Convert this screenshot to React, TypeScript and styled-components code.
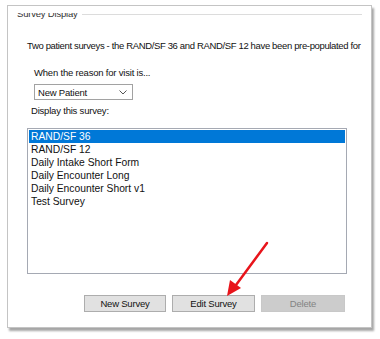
import React from "react";
import styled, { createGlobalStyle } from "styled-components";

const surveys = [
  "RAND/SF 36",
  "RAND/SF 12",
  "Daily Intake Short Form",
  "Daily Encounter Long",
  "Daily Encounter Short v1",
  "Test Survey",
];

const GlobalStyle = createGlobalStyle`
  body {
    margin: 0;
    background: #ffffff;
    font-family: "Liberation Sans", Arial, sans-serif;
    font-size: 9.5px;
    letter-spacing: -0.2px;
    color: #111;
  }
`;

const Page = styled.div`
  position: relative;
  width: 380px;
  height: 339px;
  padding: 5px 0 0 7px;
  box-sizing: border-box;
`;

const Window = styled.div`
  width: 365px;
  height: 323px;
  box-sizing: border-box;
  border: 1px solid #c4c4c4;
  box-shadow: 2px 3px 2px rgba(0, 0, 0, 0.35);
  background: #fff;
  display: flex;
  flex-direction: column;
  overflow: hidden;
`;

const GroupHeader = styled.div`
  display: flex;
  align-items: center;
  margin: 7px 9px 0 9px;
  height: 6px;
  overflow: hidden;
`;

const Legend = styled.span`
  color: #333;
  line-height: 10px;
  margin-top: -4px;
  padding-right: 4px;
  white-space: nowrap;
`;

const Rule = styled.div`
  flex: 1;
  height: 1px;
  margin-top: -3px;
  background: #dcdcdc;
`;

const Body = styled.div`
  display: flex;
  flex-direction: column;
  padding: 0 0 0 19px;
`;

const Intro = styled.div`
  margin-top: 21px;
  line-height: 12px;
  letter-spacing: -0.35px;
  white-space: nowrap;
`;

const Label = styled.div<{ $indent: number; $top: number }>`
  margin-top: ${(p) => p.$top}px;
  margin-left: ${(p) => p.$indent}px;
  line-height: 12px;
`;

const Select = styled.div`
  margin: 5px 0 0 7px;
  width: 99px;
  height: 16px;
  box-sizing: border-box;
  border: 1px solid #a2a2a2;
  display: flex;
  align-items: center;
  justify-content: space-between;
  padding: 0 5px 0 3px;
  svg {
    display: block;
  }
`;

const ListBox = styled.div`
  margin-top: 11px;
  width: 320px;
  height: 146px;
  box-sizing: border-box;
  border: 1px solid #a5a9b3;
  padding: 1px;
  display: flex;
  flex-direction: column;
`;

const ListItem = styled.div<{ $selected?: boolean }>`
  height: 13px;
  line-height: 13px;
  padding-left: 2px;
  font-size: 10.3px;
  letter-spacing: 0;
  background: ${(p) => (p.$selected ? "#0078d7" : "transparent")};
  color: ${(p) => (p.$selected ? "#fff" : "#111")};
`;

const ButtonRow = styled.div`
  display: flex;
  gap: 6px;
  margin: 21px 0 0 57px;
`;

const Button = styled.div<{ $disabled?: boolean; $width: number }>`
  width: ${(p) => p.$width}px;
  height: 17px;
  box-sizing: border-box;
  border: 1px solid ${(p) => (p.$disabled ? "#c8c8c8" : "#adadad")};
  background: ${(p) => (p.$disabled ? "#cccccc" : "#e1e1e1")};
  color: ${(p) => (p.$disabled ? "#838383" : "#111")};
  display: flex;
  align-items: center;
  justify-content: center;
`;

const Arrow = styled.svg`
  position: absolute;
  left: 0;
  top: 0;
  pointer-events: none;
`;

export default function App() {
  return (
    <>
      <GlobalStyle />
      <Page>
        <Window>
          <GroupHeader>
            <Legend>Survey Display</Legend>
            <Rule />
          </GroupHeader>
          <Body>
            <Intro>
              Two patient surveys - the RAND/SF 36 and RAND/SF 12 have been
              pre-populated for
            </Intro>
            <Label $indent={7} $top={15}>
              When the reason for visit is...
            </Label>
            <Select>
              <span>New Patient</span>
              <svg width="8" height="5" viewBox="0 0 8 5">
                <path d="M0.5 0.5 L4 4 L7.5 0.5" fill="none" stroke="#555" strokeWidth="1" />
              </svg>
            </Select>
            <Label $indent={4} $top={5}>
              Display this survey:
            </Label>
            <ListBox>
              {surveys.map((s, i) => (
                <ListItem key={s} $selected={i === 0}>
                  {s}
                </ListItem>
              ))}
            </ListBox>
            <ButtonRow>
              <Button $width={82}>New Survey</Button>
              <Button $width={83}>Edit Survey</Button>
              <Button $width={84} $disabled>
                Delete
              </Button>
            </ButtonRow>
          </Body>
        </Window>
        <Arrow width="380" height="339" viewBox="0 0 380 339">
          <line x1="267" y1="243" x2="236" y2="285" stroke="#e8141b" strokeWidth="2.5" strokeLinecap="round" />
          <polygon points="227,296 230,280 241,288" fill="#e8141b" />
        </Arrow>
      </Page>
    </>
  );
}
